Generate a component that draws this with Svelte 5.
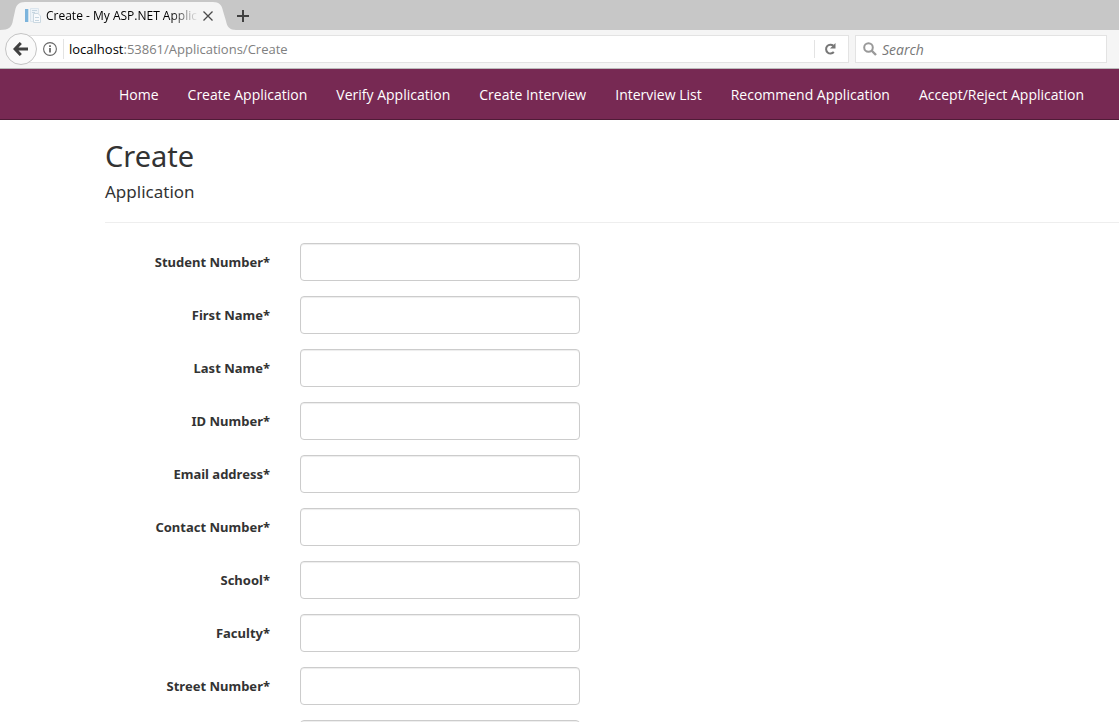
<script>
  const links = [
    'Home',
    'Create Application',
    'Verify Application',
    'Create Interview',
    'Interview List',
    'Recommend Application',
    'Accept/Reject Application'
  ];
  const fields = [
    'Student Number*',
    'First Name*',
    'Last Name*',
    'ID Number*',
    'Email address*',
    'Contact Number*',
    'School*',
    'Faculty*',
    'Street Number*',
    'Street Name*'
  ];
</script>

<div class="window">
  <header class="chrome">
    <div class="tabs">
      <div class="tab">
        <svg class="tab-shape" viewBox="0 0 236 28" preserveAspectRatio="none" aria-hidden="true">
          <path d="M0 28C9 28 12 25 13 18L15 9C16 3 19 0 25 0H213C219 0 222 3 223 9L226 19C227 25 230 28 236 28Z" fill="#f5f5f5" />
        </svg>
        <svg class="favicon" width="16" height="16" viewBox="0 0 16 16" aria-hidden="true">
          <path d="M0 1H3V14H0Z" fill="#7cb4dc" />
          <path d="M3 1H4V14H3Z" fill="#cfe2ee" />
          <path d="M5.500 .5H13.500V13.500H5.500Z" fill="#edf3f8" stroke="#dbe5ed" />
          <path d="M8.500 5.500H13L15.500 8V14.500H8.500Z" fill="#f8fafc" stroke="#cbd8e1" />
          <path d="M7 2.500H12M7 4.500H10M10 9.500H14M10 12.500H14" stroke="#c5d5e0" />
        </svg>
        <span class="tab-title">Create - My ASP.NET Applic</span>
        <button class="tab-close" aria-label="Close tab">
          <svg width="12" height="12" viewBox="0 0 12 12"><path d="M1.500 1.500L10.500 10.500M10.500 1.500L1.500 10.500" stroke="#4a4a4a" stroke-width="1.300" /></svg>
        </button>
      </div>
      <button class="new-tab" aria-label="New tab">
        <svg width="12" height="12" viewBox="0 0 12 12"><path d="M6 0V12M0 6H12" stroke="#404040" stroke-width="2" /></svg>
      </button>
    </div>
    <div class="toolbar">
      <button class="back" aria-label="Back">
        <svg width="16" height="14" viewBox="0 0 16 14"><path d="M7.800 1L2 7L7.800 13M2.500 7H15" fill="none" stroke="#404040" stroke-width="3" /></svg>
      </button>
      <div class="address">
        <svg class="info" width="14" height="14" viewBox="0 0 14 14" aria-hidden="true">
          <circle cx="7" cy="7" r="6.400" fill="none" stroke="#666" stroke-width="1.100" />
          <path d="M7 6V10.500M7 3.300V4.900" stroke="#555" stroke-width="1.600" />
        </svg>
        <div class="url"><span>localhost</span>:53861/Applications/Create</div>
        <button class="reload" aria-label="Reload">
          <svg width="12" height="12" viewBox="0 0 12 12"><path d="M9.400 2.800A4.400 4.400 0 1 0 9.800 9" fill="none" stroke="#777" stroke-width="2" /><path d="M11.500 0V5.500H6Z" fill="#777" /></svg>
        </button>
      </div>
      <label class="search">
        <svg width="14" height="14" viewBox="0 0 14 14" aria-hidden="true"><circle cx="5.500" cy="5.500" r="4.300" fill="none" stroke="#999" stroke-width="2" /><path d="M8.500 8.500L13 13" stroke="#999" stroke-width="2.400" /></svg>
        <input type="search" placeholder="Search" aria-label="Search" />
      </label>
    </div>
  </header>

  <div class="page">
    <nav>
      {#each links as link}
        <a href="#top">{link}</a>
      {/each}
    </nav>
    <main>
      <h2>Create</h2>
      <h4>Application</h4>
      <hr />
      <form>
        {#each fields as field, i}
          <div class="row">
            <label for="field-{i}">{field}</label>
            <input id="field-{i}" type="text" />
          </div>
        {/each}
      </form>
    </main>
  </div>
</div>

<style>
  :global(body) {
    margin: 0;
    background: #fff;
  }
  .window,
  .window * {
    box-sizing: border-box;
  }
  .window {
    display: flex;
    flex-direction: column;
    height: 100vh;
    font-family: "Noto Sans", "Open Sans", sans-serif;
    color: #333;
  }
  button {
    display: flex;
    align-items: center;
    justify-content: center;
    padding: 0;
    border: 0;
    background: none;
  }
  .chrome {
    flex: none;
    background: #f5f5f5;
    border-bottom: 1px solid #bbb;
    font-family: "Open Sans", sans-serif;
  }
  .tabs {
    display: flex;
    align-items: flex-end;
    height: 30px;
    background: #c7c7c7;
  }
  .tab {
    position: relative;
    display: flex;
    align-items: center;
    width: 236px;
    height: 28px;
    padding-left: 25px;
  }
  .tab-shape {
    position: absolute;
    inset: 0;
    width: 100%;
    height: 100%;
  }
  .favicon,
  .tab-title,
  .tab-close {
    position: relative;
    flex: none;
  }
  .tab-title {
    width: 152px;
    margin-left: 5px;
    white-space: nowrap;
    font-size: 12px;
    line-height: 20px;
    color: #000;
    mask-image: linear-gradient(to right, #000 125px, transparent 152px);
  }
  .tab-close {
    width: 20px;
    height: 20px;
  }
  .new-tab {
    width: 14px;
    height: 28px;
  }
  .toolbar {
    display: flex;
    align-items: center;
    height: 38px;
    padding: 0 12px 0 5px;
  }
  .back {
    position: relative;
    flex: none;
    width: 32px;
    height: 32px;
    border: 1px solid #c4c4c4;
    border-radius: 50%;
    background: #fafafa;
  }
  .address {
    display: flex;
    flex: 1;
    align-items: center;
    height: 28px;
    margin-left: -12px;
    padding-left: 17px;
    border: 1px solid #e3e3e3;
    background: #fff;
  }
  .info {
    flex: none;
  }
  .url {
    flex: 1;
    margin-left: 6px;
    padding: 1px 0 0 5px;
    border-left: 1px solid #e3e3e3;
    font-size: 13px;
    line-height: 19px;
    color: #808080;
  }
  .url span {
    color: #000;
  }
  .reload {
    width: 34px;
    height: 18px;
    padding-right: 3px;
    border-left: 1px solid #e3e3e3;
  }
  .search {
    display: flex;
    flex: none;
    align-items: center;
    gap: 5px;
    width: 252px;
    height: 28px;
    margin-left: 6px;
    padding: 0 7px;
    border: 1px solid #e3e3e3;
    background: #fff;
  }
  .search input {
    flex: 1;
    min-width: 0;
    padding: 1px 0 0;
    border: 0;
    outline: 0;
    background: none;
    font: italic 14px/20px "Open Sans", sans-serif;
  }
  .search input::placeholder {
    color: #777;
  }
  .page {
    flex: 1;
    min-height: 0;
    overflow: hidden;
    background: #fff;
  }
  nav {
    display: flex;
    gap: 29px;
    padding: 16px 0 14px 119px;
    background: #772953;
    border-bottom: 1px solid #4f1b37;
  }
  nav a {
    color: #fff;
    font-family: "Open Sans", sans-serif;
    font-size: 14px;
    line-height: 20px;
    white-space: nowrap;
    text-decoration: none;
  }
  main {
    padding: 19px 0 0 105px;
  }
  h2,
  h4 {
    margin: 0;
    font-weight: 400;
  }
  h2 {
    font-size: 29px;
    line-height: 34px;
  }
  h4 {
    margin-top: 9px;
    font-size: 17px;
    line-height: 20px;
  }
  hr {
    margin: 20px 0;
    border: 0;
    border-top: 1px solid #eee;
  }
  .row {
    display: flex;
    gap: 30px;
    margin-bottom: 15px;
  }
  .row label {
    width: 165px;
    padding-top: 9px;
    font-size: 13px;
    font-weight: 700;
    line-height: 20px;
    text-align: right;
  }
  .row input {
    width: 280px;
    height: 38px;
    padding: 8px 12px;
    border: 1px solid #ccc;
    border-radius: 4px;
    background: #fff;
    box-shadow: inset 0 1px 1px rgba(0, 0, 0, 0.075);
    font: inherit;
  }
</style>
